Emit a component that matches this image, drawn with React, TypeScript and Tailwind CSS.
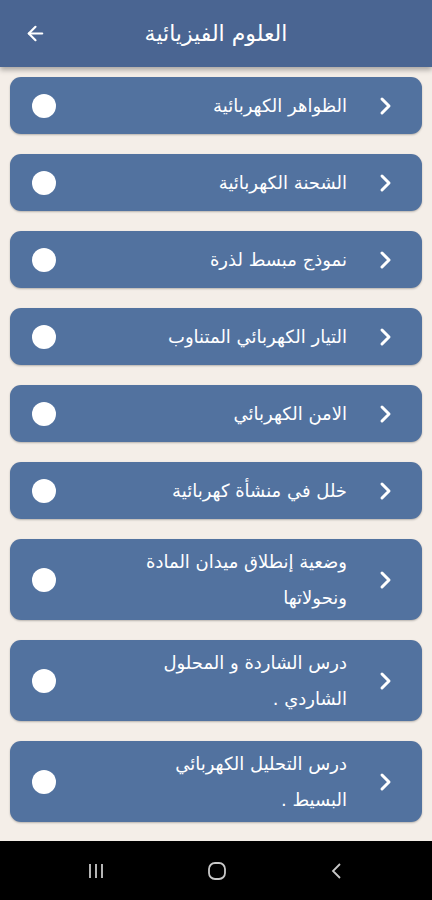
import { ArrowLeft } from 'lucide-react';

const lessons: string[][] = [
  ['الظواهر الكهربائية'],
  ['الشحنة الكهربائية'],
  ['نموذج مبسط لذرة'],
  ['التيار الكهربائي المتناوب'],
  ['الامن الكهربائي'],
  ['خلل في منشأة كهربائية'],
  ['وضعية إنطلاق ميدان المادة', 'ونحولاتها'],
  ['درس الشاردة و المحلول', 'الشاردي .'],
  ['درس التحليل الكهربائي', 'البسيط .'],
];

const Chevron = () => (
  <svg width="14" height="20" viewBox="0 0 14 20" fill="none" stroke="white" strokeWidth="3" strokeLinecap="round" strokeLinejoin="round">
    <path d="M4 3l7 7-7 7" />
  </svg>
);

const LessonCard = ({ lines }: { lines: string[] }) => {
  const tall = lines.length > 1;
  return (
    <div
      className={`flex items-center rounded-[11px] bg-[#52729f] shadow-[0_1px_2px_rgba(0,0,0,0.25)] ${
        tall ? 'h-[81px]' : 'h-[57px]'
      }`}
    >
      <div className="ml-[22px] h-[24px] w-[24px] rounded-full bg-white" />
      <div
        dir="rtl"
        className="flex-1 text-right text-[18px] leading-[36px] text-white whitespace-nowrap"
      >
        {lines.map((l) => (
          <div key={l}>{l}</div>
        ))}
      </div>
      <div className="ml-[31px] mr-[30px]">
        <Chevron />
      </div>
    </div>
  );
};

export default function App() {
  return (
    <div
      className="flex h-[900px] w-[432px] flex-col overflow-hidden bg-[#f4eee8]"
      style={{ fontFamily: '"DejaVu Sans", sans-serif' }}
    >
      {/* Header */}
      <div className="relative z-10 flex h-[67px] shrink-0 items-center bg-[#4a6592] px-[24px] shadow-[0_3px_5px_rgba(0,0,0,0.3)]">
        <ArrowLeft className="h-[23px] w-[23px] text-white" strokeWidth={2.25} />
        <div dir="rtl" className="flex-1 pr-[23px] text-center text-[22px] text-white">
          العلوم الفيزيائية
        </div>
      </div>

      {/* List */}
      <div className="flex flex-1 flex-col gap-[20px] px-[10px] pt-[10px]">
        {lessons.map((lines) => (
          <LessonCard key={lines[0]} lines={lines} />
        ))}
      </div>

      {/* Android nav bar */}
      <div className="flex h-[59px] shrink-0 items-center justify-around bg-black px-[36px] text-[#c8c8c8]">
        <svg width="22" height="20" viewBox="0 0 22 20" fill="none" stroke="currentColor" strokeWidth="1.8">
          <path d="M5 3v14M11 3v14M17 3v14" />
        </svg>
        <svg width="22" height="22" viewBox="0 0 22 22" fill="none" stroke="currentColor" strokeWidth="1.8">
          <rect x="3" y="3" width="16" height="16" rx="6" />
        </svg>
        <svg width="20" height="20" viewBox="0 0 20 20" fill="none" stroke="currentColor" strokeWidth="1.8">
          <path d="M13 3l-7 7 7 7" />
        </svg>
      </div>
    </div>
  );
}
